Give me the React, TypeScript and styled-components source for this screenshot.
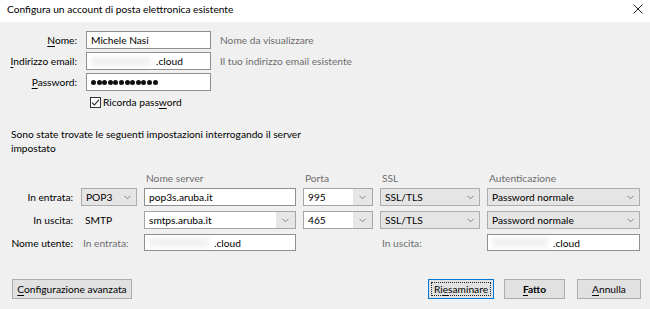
import React from "react";
import styled, { createGlobalStyle } from "styled-components";

const GlobalStyle = createGlobalStyle`
  html, body { margin: 0; padding: 0; background: #f0f0f0; }
  body {
    font-family: Lato, "Liberation Sans", sans-serif;
    font-size: 10.2px;
    line-height: 14px;
    color: #000;
  }
  * { box-sizing: border-box; }
`;

const Window = styled.div`
  width: 650px;
  height: 309px;
  background: #f0f0f0;
  display: flex;
  flex-direction: column;
  overflow: hidden;
`;

const TitleBar = styled.div`
  height: 22px;
  flex: none;
  background: #fff;
  display: flex;
  align-items: flex-start;
  justify-content: space-between;
  padding: 2px 7px 0 7px;
`;

const CloseIcon = styled.svg`
  margin-top: 2px;
`;

const FormGrid = styled.div`
  display: grid;
  grid-template-columns: 78px 125px auto;
  grid-auto-rows: 18px;
  column-gap: 8px;
  row-gap: 3px;
  margin-top: 9px;
`;

const Label = styled.div`
  text-align: right;
  align-self: center;
  white-space: nowrap;
  padding-right: 1px;
`;

const Key = styled.span`
  text-decoration: underline;
  text-underline-offset: 1.5px;
  text-decoration-thickness: 1px;
`;

const TextBox = styled.div<{ $h?: number }>`
  height: ${(p) => p.$h ?? 18}px;
  background: #fff;
  border: 1px solid #8f8f8f;
  display: flex;
  align-items: center;
  padding: 0 4px;
  white-space: nowrap;
  overflow: hidden;
`;

const Hint = styled.div`
  color: #6d6d6d;
  align-self: center;
  margin-left: 1px;
  white-space: nowrap;
`;

const Blur = styled.span<{ $w: number }>`
  display: inline-block;
  width: ${(p) => p.$w}px;
  height: 9px;
  margin-right: 5px;
  background: #f1f1f1;
  filter: blur(2.5px);
  flex: none;
`;

const Dots = styled.div`
  display: flex;
  gap: 0.6px;
`;

const Dot = styled.span`
  width: 5px;
  height: 5px;
  border-radius: 50%;
  background: #111;
`;

const CheckRow = styled.label`
  grid-column: 2 / span 2;
  display: flex;
  align-items: center;
  gap: 2px;
  padding-left: 4px;
  margin-top: 1px;
  height: 14px;
`;

const CheckBox = styled.span`
  width: 11px;
  height: 11px;
  border: 1px solid #333;
  background: #fff;
  display: flex;
  align-items: center;
  justify-content: center;
  flex: none;
`;

const Paragraph = styled.p`
  margin: 15px 0 0 11px;
  width: 320px;
`;

const ServerGrid = styled.div`
  display: grid;
  grid-template-columns: 74px 56px 152px 70px 100px 153px;
  grid-template-rows: 12px 18px 18px 17px;
  column-gap: 7px;
  row-gap: 5px;
  margin-top: 16px;
`;

const ColHead = styled.div`
  color: #6d6d6d;
  padding-left: 2px;
  white-space: nowrap;
`;

const Plain = styled.div<{ $muted?: boolean }>`
  align-self: center;
  padding-left: ${(p) => (p.$muted ? "2px" : "4px")};
  color: ${(p) => (p.$muted ? "#6d6d6d" : "#000")};
  white-space: nowrap;
`;

const Select = styled.div`
  height: 18px;
  background: #e5e5e5;
  border: 1px solid #adadad;
  display: flex;
  align-items: center;
  justify-content: space-between;
  padding: 0 5px 0 4px;
  white-space: nowrap;
`;

const Combo = styled.div`
  height: 18px;
  background: #fff;
  border: 1px solid #a5a5a5;
  display: flex;
  align-items: stretch;
  white-space: nowrap;
`;

const ComboText = styled.div`
  flex: 1;
  display: flex;
  align-items: center;
  padding-left: 4px;
`;

const ComboButton = styled.div`
  width: 19px;
  background: #e6e6e6;
  display: flex;
  align-items: center;
  justify-content: center;
`;

const ButtonRow = styled.div`
  display: flex;
  align-items: center;
  margin-top: 28px;
  padding: 0 9px 0 12px;
`;

const Spacer = styled.div`
  flex: 1;
`;

const Button = styled.div<{ $w: number; $default?: boolean; $bold?: boolean; $gap?: number }>`
  width: ${(p) => p.$w}px;
  height: 20px;
  margin-left: ${(p) => p.$gap ?? 0}px;
  background: #e1e1e1;
  border: 1px solid ${(p) => (p.$default ? "#0078d7" : "#adadad")};
  display: flex;
  align-items: center;
  justify-content: center;
  font-weight: ${(p) => (p.$bold ? 700 : 400)};
  position: relative;
  white-space: nowrap;
  ${(p) =>
    p.$default
      ? `&::after {
          content: "";
          position: absolute;
          inset: 2px;
          border: 1px dotted #222;
        }`
      : ""}
`;

const Chevron = () => (
  <svg width="7" height="5" viewBox="0 0 7 5">
    <path d="M0.5 0.8 L3.5 3.8 L6.5 0.8" fill="none" stroke="#777" strokeWidth="0.9" />
  </svg>
);

const PortCombo = ({ value }: { value: string }) => (
  <Combo>
    <ComboText>{value}</ComboText>
    <ComboButton>
      <Chevron />
    </ComboButton>
  </Combo>
);

const DropSelect = ({ value }: { value: string }) => (
  <Select>
    <span>{value}</span>
    <Chevron />
  </Select>
);

export default function App() {
  return (
    <Window>
      <GlobalStyle />
      <TitleBar>
        <span>Configura un account di posta elettronica esistente</span>
        <CloseIcon width="10" height="10" viewBox="0 0 10 10">
          <path d="M0.5 0.5 L9.5 9.5 M9.5 0.5 L0.5 9.5" stroke="#222" strokeWidth="1" fill="none" />
        </CloseIcon>
      </TitleBar>

      <FormGrid>
        <Label>
          <Key>N</Key>ome:
        </Label>
        <TextBox>Michele Nasi</TextBox>
        <Hint>Nome da visualizzare</Hint>

        <Label>
          <Key>I</Key>ndirizzo email:
        </Label>
        <TextBox>
          <Blur $w={60} />
          .cloud
        </TextBox>
        <Hint>Il tuo indirizzo email esistente</Hint>

        <Label>
          <Key>P</Key>assword:
        </Label>
        <TextBox>
          <Dots>
            {Array.from({ length: 12 }).map((_, i) => (
              <Dot key={i} />
            ))}
          </Dots>
        </TextBox>
        <div />

        <div />
        <CheckRow>
          <CheckBox>
            <svg width="9" height="9" viewBox="0 0 9 9">
              <path d="M1 4.6 L3.4 7 L8 1.6" fill="none" stroke="#222" strokeWidth="1.1" />
            </svg>
          </CheckBox>
          <span>
            Ricorda pass<Key>w</Key>ord
          </span>
        </CheckRow>
      </FormGrid>

      <Paragraph>
        Sono state trovate le seguenti impostazioni interrogando il server
        <br />
        impostato
      </Paragraph>

      <ServerGrid>
        <div />
        <div />
        <ColHead>Nome server</ColHead>
        <ColHead>Porta</ColHead>
        <ColHead>SSL</ColHead>
        <ColHead>Autenticazione</ColHead>

        <Label>In entrata:</Label>
        <DropSelect value="POP3" />
        <TextBox>pop3s.aruba.it</TextBox>
        <PortCombo value="995" />
        <DropSelect value="SSL/TLS" />
        <DropSelect value="Password normale" />

        <Label>In uscita:</Label>
        <Plain>SMTP</Plain>
        <PortCombo value="smtps.aruba.it" />
        <PortCombo value="465" />
        <DropSelect value="SSL/TLS" />
        <DropSelect value="Password normale" />

        <Label>Nome utente:</Label>
        <Plain $muted>In entrata:</Plain>
        <TextBox $h={17}>
          <Blur $w={60} />
          .cloud
        </TextBox>
        <div />
        <Plain $muted>In uscita:</Plain>
        <TextBox $h={17}>
          <Blur $w={56} />
          .cloud
        </TextBox>
      </ServerGrid>

      <ButtonRow>
        <Button $w={120}>
          <span>
            <Key>C</Key>onfigurazione avanzata
          </span>
        </Button>
        <Spacer />
        <Button $w={66} $default>
          <span>
            Ri<Key>e</Key>saminare
          </span>
        </Button>
        <Button $w={61} $gap={10} $bold>
          <span>
            <Key>F</Key>atto
          </span>
        </Button>
        <Button $w={64} $gap={12}>
          <span>
            <Key>A</Key>nnulla
          </span>
        </Button>
      </ButtonRow>
    </Window>
  );
}
